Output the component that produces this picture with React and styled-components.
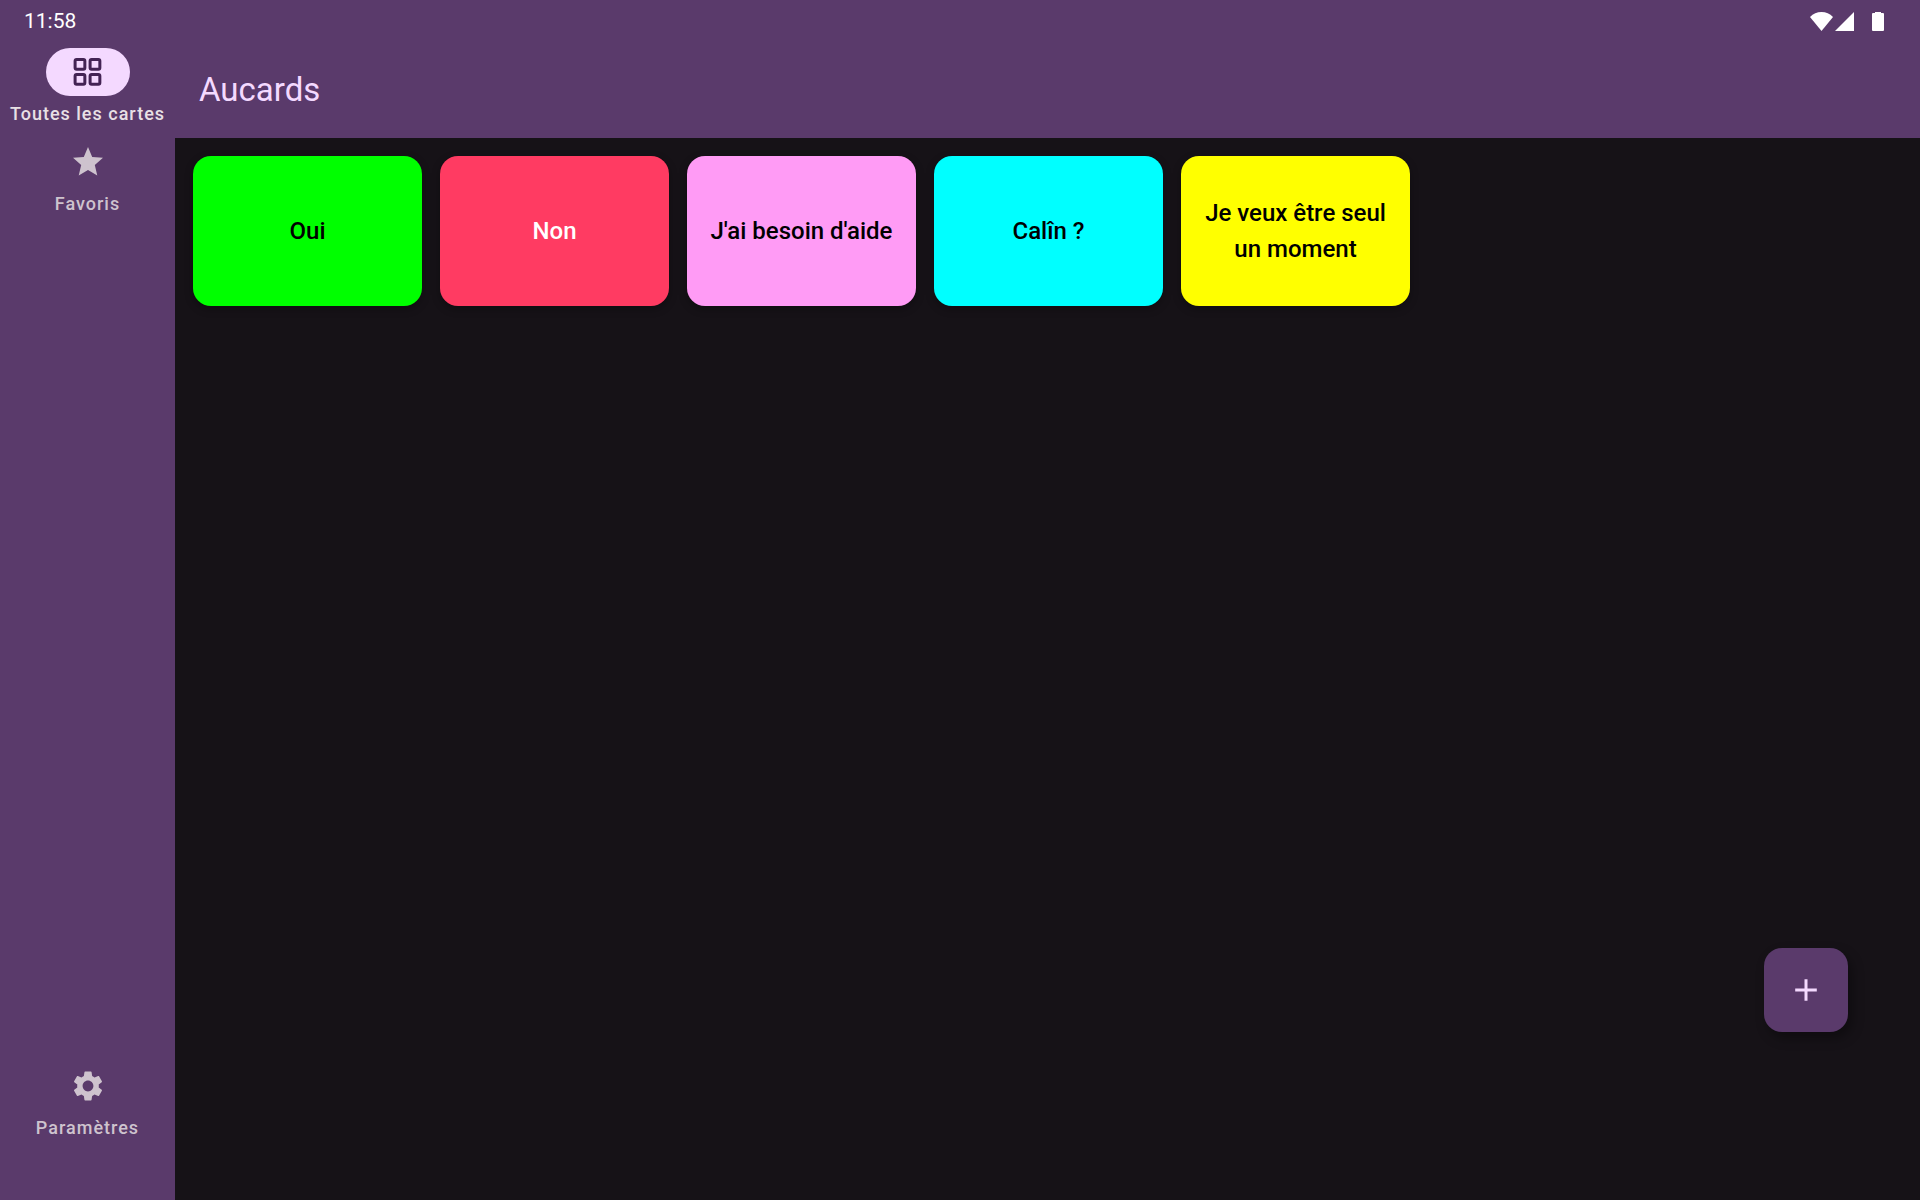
import React, { useState } from "react";
import styled, { ThemeProvider, createGlobalStyle } from "styled-components";

const theme = {
  primary: "#5a3a6b",
  onPrimary: "#f4d9ff",
  indicatorIcon: "#432354",
  labelActive: "#e8e0e5",
  label: "#cec3ce",
  surface: "#161217",
};

const GlobalStyle = createGlobalStyle`
  * { box-sizing: border-box; }
  body {
    margin: 0;
    background: ${theme.surface};
    font-family: Roboto, "Noto Sans", sans-serif;
  }
  button { font: inherit; border: 0; padding: 0; cursor: pointer; }
`;

const Page = styled.div`
  display: flex;
  flex-direction: column;
  min-height: 100vh;
`;

const StatusBar = styled.header`
  display: flex;
  align-items: center;
  justify-content: space-between;
  height: 42px;
  padding: 0 36px 0 24px;
  background: ${(p) => p.theme.primary};
  color: #fff;
  font-size: 21px;
`;

const StatusIcons = styled.div`
  display: flex;
  align-items: center;
  gap: 2px;
`;

const Battery = styled.svg`
  margin-left: 16px;
`;

const Body = styled.div`
  display: flex;
  flex: 1;
`;

const Rail = styled.nav`
  display: flex;
  flex-direction: column;
  gap: 12px;
  flex: none;
  width: 175px;
  padding: 6px 0 60px;
  background: ${(p) => p.theme.primary};
`;

const RailSpacer = styled.div`
  flex: 1;
`;

const RailItem = styled.button`
  display: flex;
  flex-direction: column;
  align-items: center;
  gap: 6px;
  background: none;
  color: ${(p) => (p.$active ? p.theme.labelActive : p.theme.label)};
`;

const Indicator = styled.span`
  display: grid;
  place-items: center;
  width: 84px;
  height: 48px;
  border-radius: 24px;
  background: ${(p) => (p.$active ? p.theme.onPrimary : "transparent")};
  color: ${(p) => (p.$active ? p.theme.indicatorIcon : "inherit")};
`;

const RailLabel = styled.span`
  font-size: 18px;
  font-weight: 500;
  line-height: 24px;
  letter-spacing: 1px;
  white-space: nowrap;
`;

const Main = styled.main`
  flex: 1;
  min-width: 0;
`;

const AppBar = styled.div`
  display: flex;
  align-items: center;
  height: 96px;
  padding: 0 24px;
  background: ${(p) => p.theme.primary};
`;

const Title = styled.h1`
  margin: 0;
  color: ${(p) => p.theme.onPrimary};
  font-size: 33px;
  font-weight: 400;
  line-height: 42px;
`;

const CardGrid = styled.div`
  display: grid;
  grid-template-columns: repeat(auto-fill, minmax(225px, 1fr));
  gap: 18px;
  padding: 18px 16px 18px 18px;
`;

const Card = styled.button`
  height: 150px;
  padding: 0 18px;
  border-radius: 18px;
  background: ${(p) => p.$fill};
  color: ${(p) => p.$ink};
  box-shadow: 0 3px 9px rgba(0, 0, 0, 0.3);
  font-size: 24px;
  font-weight: 500;
  line-height: 36px;
`;

const AddButton = styled.button`
  position: fixed;
  right: 72px;
  bottom: 168px;
  display: grid;
  place-items: center;
  width: 84px;
  height: 84px;
  border-radius: 18px;
  background: ${(p) => p.theme.primary};
  color: ${(p) => p.theme.onPrimary};
  box-shadow: 4px 6px 12px rgba(0, 0, 0, 0.35);
`;

const Icon = ({ children }) => (
  <svg width="36" height="36" viewBox="0 0 24 24" fill="currentColor" aria-hidden="true">
    {children}
  </svg>
);

const GridIcon = () => (
  <Icon>
    {[[2.4, 2.7], [12.4, 2.7], [2.4, 12.7], [12.4, 12.7]].map(([x, y]) => (
      <path
        key={`${x}-${y}`}
        fillRule="evenodd"
        d={`M${x + 2} ${y}h4.5a2 2 0 0 1 2 2v4.5a2 2 0 0 1-2 2h-4.5a2 2 0 0 1-2-2v-4.5a2 2 0 0 1 2-2zM${x + 2} ${y + 2}v4.5h4.5v-4.5z`}
      />
    ))}
  </Icon>
);

const StarIcon = () => (
  <Icon>
    <path d="M12 17.27 18.18 21l-1.64-7.03L22 9.24l-7.19-.61L12 2 9.19 8.63 2 9.24l5.46 4.73L5.82 21z" />
  </Icon>
);

const SettingsIcon = () => (
  <Icon>
    <path
      fillRule="evenodd"
      d="M19.14 12.94c.04-.3.06-.61.06-.94 0-.32-.02-.64-.07-.94l2.03-1.58c.18-.14.23-.41.12-.61l-1.92-3.32c-.12-.22-.37-.29-.59-.22l-2.39.96c-.5-.38-1.03-.7-1.62-.94l-.36-2.54c-.04-.24-.24-.41-.48-.41h-3.84c-.24 0-.43.17-.47.41l-.36 2.54c-.59.24-1.13.57-1.62.94l-2.39-.96c-.22-.08-.47 0-.59.22L2.74 8.87c-.12.21-.08.47.12.61l2.03 1.58c-.05.3-.09.63-.09.94s.02.64.07.94l-2.03 1.58c-.18.14-.23.41-.12.61l1.92 3.32c.12.22.37.29.59.22l2.39-.96c.5.38 1.03.7 1.62.94l.36 2.54c.05.24.24.41.48.41h3.84c.24 0 .44-.17.47-.41l.36-2.54c.59-.24 1.13-.56 1.62-.94l2.39.96c.22.08.47 0 .59-.22l1.92-3.32c.12-.22.07-.47-.12-.61zM12 15.6c-1.98 0-3.6-1.62-3.6-3.6s1.62-3.6 3.6-3.6 3.6 1.62 3.6 3.6-1.62 3.6-3.6 3.6z"
    />
  </Icon>
);

const AddIcon = () => (
  <Icon>
    <path d="M19.2 13h-6.2v6.2h-2V13H4.8v-2H11V4.8h2V11h6.2z" />
  </Icon>
);

const cards = [
  { text: "Oui", fill: "#00ff00", ink: "#000" },
  { text: "Non", fill: "#ff3b62", ink: "#fff" },
  { text: "J'ai besoin d'aide", fill: "#ff9bf5", ink: "#000" },
  { text: "Calîn ?", fill: "#00ffff", ink: "#000" },
  { text: "Je veux être seul un moment", fill: "#ffff00", ink: "#000" },
];

const RailEntry = ({ icon, label, active, onClick }) => (
  <RailItem type="button" $active={active} aria-pressed={active} onClick={onClick}>
    <Indicator $active={active}>{icon}</Indicator>
    <RailLabel>{label}</RailLabel>
  </RailItem>
);

export default function App() {
  const [view, setView] = useState("all");
  return (
    <ThemeProvider theme={theme}>
      <GlobalStyle />
      <Page>
        <StatusBar>
          <time>11:58</time>
          <StatusIcons>
            <svg width="23" height="19" viewBox="0 0 23 19" fill="#fff" aria-hidden="true">
              <path d="M11.5 19 0 5Q4.8 0 11.5 0T23 5z" />
            </svg>
            <svg width="19" height="19" viewBox="0 0 19 19" fill="#fff" aria-hidden="true">
              <path d="M19 0v19H0z" />
            </svg>
            <Battery width="12" height="19" viewBox="0 0 12 19" fill="#fff" aria-hidden="true">
              <path d="M3 0h6v1h2q1 0 1 1v16q0 1-1 1H1q-1 0-1-1V2q0-1 1-1h2z" />
            </Battery>
          </StatusIcons>
        </StatusBar>
        <Body>
          <Rail>
            <RailEntry
              icon={<GridIcon />}
              label="Toutes les cartes"
              active={view === "all"}
              onClick={() => setView("all")}
            />
            <RailEntry
              icon={<StarIcon />}
              label="Favoris"
              active={view === "favorites"}
              onClick={() => setView("favorites")}
            />
            <RailSpacer />
            <RailEntry
              icon={<SettingsIcon />}
              label="Paramètres"
              active={view === "settings"}
              onClick={() => setView("settings")}
            />
          </Rail>
          <Main>
            <AppBar>
              <Title>Aucards</Title>
            </AppBar>
            <CardGrid>
              {cards.map((c) => (
                <Card key={c.text} type="button" $fill={c.fill} $ink={c.ink}>
                  {c.text}
                </Card>
              ))}
            </CardGrid>
          </Main>
        </Body>
        <AddButton type="button" aria-label="Ajouter une carte">
          <AddIcon />
        </AddButton>
      </Page>
    </ThemeProvider>
  );
}
